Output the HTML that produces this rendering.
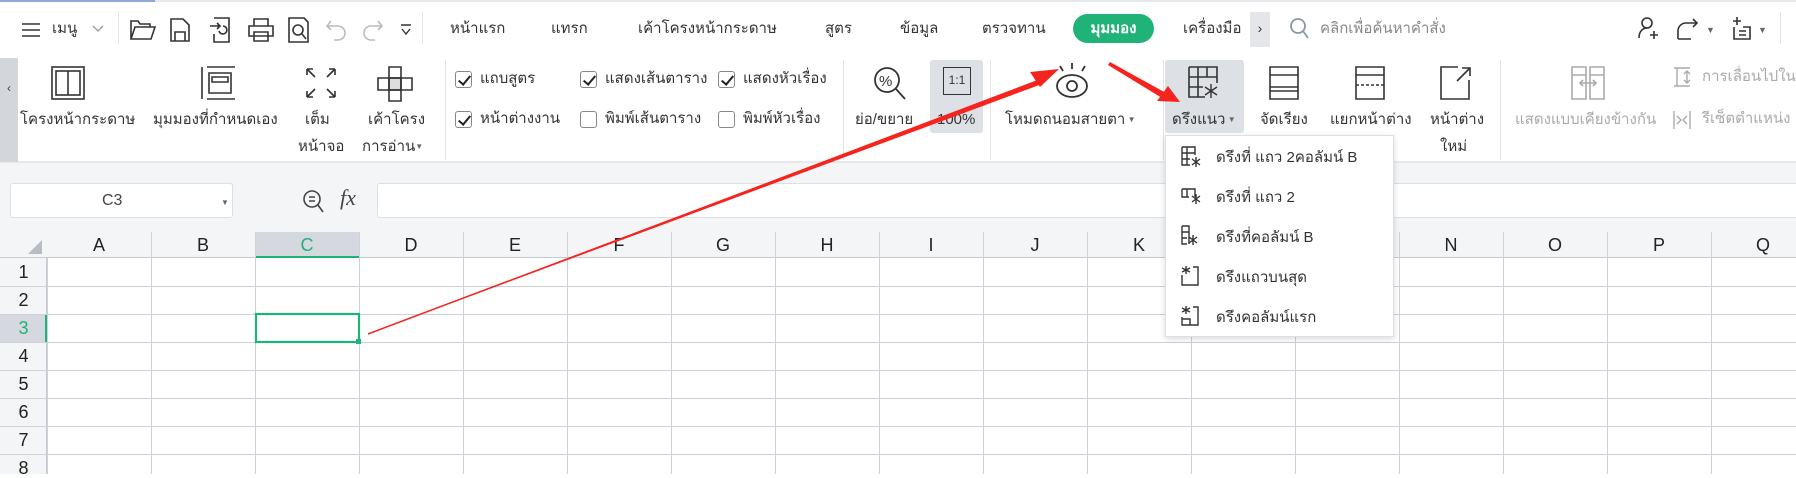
<!DOCTYPE html>
<html><head><meta charset="utf-8">
<style>
*{margin:0;padding:0;box-sizing:border-box}
body{width:1796px;height:474px;overflow:hidden;background:#fff;font-family:"Liberation Sans",sans-serif;color:#333;position:relative;line-height:20px}
.a{position:absolute;white-space:nowrap}
.t{font-size:15px;color:#333}
.sep{position:absolute;width:1px;background:#e2e4e8}
svg{position:absolute;overflow:visible}
.cb{position:absolute;width:17px;height:17px;border:1px solid #888;border-radius:3px;background:#fff}
.cb.on::after{content:"";position:absolute;left:5px;top:1px;width:5px;height:10px;border:solid #222;border-width:0 2px 2px 0;transform:rotate(40deg)}
.col{position:absolute;top:232px;height:26px;font-size:18px;text-align:center;line-height:26px;color:#222}
.row{position:absolute;left:0;width:47px;font-size:18px;text-align:center;color:#222}
.mi{position:absolute;left:1216px;font-size:15px;color:#333}
</style></head><body>
<div class="a" style="left:0;top:0;width:1796px;height:57px;background:#fff;border-top:2px solid #e6e8eb"></div>
<div class="a" style="left:0;top:0;width:155px;height:2px;background:#8fa8d8"></div>
<svg style="left:22px;top:22px" width="20" height="16"><path d="M0 2H18M0 8H18M0 14H18" stroke="#333" stroke-width="1.6"/></svg>
<div class="a t" style="left:52px;top:19px">เมนู</div>
<svg style="left:92px;top:25px" width="12" height="8"><path d="M1 1L6 6L11 1" stroke="#999" fill="none" stroke-width="1.3"/></svg>
<div class="sep" style="left:118px;top:12px;height:32px"></div>
<svg style="left:130px;top:19px" width="26" height="22" fill="none" stroke="#333" stroke-width="1.6"><path d="M1 20V2H8L10 5H20V8M1 20L5 8H25L21 20Z"/></svg>
<svg style="left:170px;top:18px" width="20" height="24" fill="none" stroke="#333" stroke-width="1.6"><path d="M1 1H13L19 7V23H1Z M5 23V14H15V23"/></svg>
<svg style="left:209px;top:17px" width="22" height="26" fill="none" stroke="#333" stroke-width="1.6"><path d="M5 1H20V25H5V17M1 9H11M8 6L11 9L8 12M10 14A4 4 0 1 0 14 9"/></svg>
<svg style="left:248px;top:18px" width="26" height="24" fill="none" stroke="#333" stroke-width="1.6"><path d="M6 8V1H20V8M1 8H25V18H1Z M6 14H20V23H6Z"/></svg>
<svg style="left:288px;top:17px" width="22" height="26" fill="none" stroke="#333" stroke-width="1.6"><path d="M1 1H16L20 5V25H1Z"/><circle cx="10" cy="13" r="5"/><path d="M14 17L18 22"/></svg>
<svg style="left:326px;top:20px" width="22" height="22" fill="none" stroke="#bbb" stroke-width="1.6"><path d="M5 1L1 6L5 10M1 6H12A7 7 0 0 1 12 20H8"/></svg>
<svg style="left:362px;top:20px" width="22" height="22" fill="none" stroke="#bbb" stroke-width="1.6"><path d="M16 1L20 6L16 10M20 6H9A7 7 0 0 0 9 20H13"/></svg>
<svg style="left:400px;top:24px" width="12" height="14" fill="none" stroke="#333" stroke-width="1.4"><path d="M1 1H11M2 5L6 10L10 5"/></svg>
<div class="sep" style="left:422px;top:12px;height:32px"></div>
<div class="a t" style="left:450px;top:19px">หน้าแรก</div>
<div class="a t" style="left:551px;top:19px">แทรก</div>
<div class="a t" style="left:638px;top:19px">เค้าโครงหน้ากระดาษ</div>
<div class="a t" style="left:825px;top:19px">สูตร</div>
<div class="a t" style="left:900px;top:19px">ข้อมูล</div>
<div class="a t" style="left:982px;top:19px">ตรวจทาน</div>
<div class="a" style="left:1073px;top:14px;width:81px;height:29px;border-radius:15px;background:#1fb377;color:#fff;font-size:15px;font-weight:bold;text-align:center;line-height:29px">มุมมอง</div>
<div class="a t" style="left:1183px;top:19px">เครื่องมือ</div>
<div class="a" style="left:1250px;top:12px;width:20px;height:35px;background:#e4e6ea;font-size:14px;text-align:center;line-height:32px">›</div>
<svg style="left:1290px;top:18px" width="20" height="22" fill="none" stroke="#8c96a8" stroke-width="1.8"><circle cx="8" cy="8" r="7"/><path d="M13 13L18 20"/></svg>
<div class="a" style="left:1320px;top:19px;font-size:15px;color:#888">คลิกเพื่อค้นหาคำสั่ง</div>
<svg style="left:1637px;top:16px" width="24" height="24" fill="none" stroke="#333" stroke-width="1.6"><circle cx="10" cy="7" r="5"/><path d="M2 22C2 15 6 12 10 12M17 15V23M13 19H21"/></svg>
<svg style="left:1677px;top:17px" width="24" height="24" fill="none" stroke="#333" stroke-width="1.6"><path d="M1 22H14M1 22V14A8 8 0 0 1 9 6H20M16 2L20 6L16 10"/></svg>
<div class="a" style="left:1706px;top:20px;font-size:9px;color:#666">▼</div>
<svg style="left:1731px;top:16px" width="24" height="24" fill="none" stroke="#333" stroke-width="1.6"><path d="M6 1V9M2 5H10M3 11V23H19V11H12M8 15H15M8 19H15"/></svg>
<div class="a" style="left:1758px;top:20px;font-size:9px;color:#666">▼</div>
<div class="sep" style="left:1780px;top:12px;height:32px"></div>

<div class="a" style="left:0;top:57px;width:1796px;height:106px;background:#fff;border-bottom:2px solid #e8e9ec"></div>
<div class="a" style="left:0;top:58px;width:18px;height:104px;background:#d3d6db;font-size:12px;text-align:center;line-height:60px;color:#444">‹</div>
<svg style="left:51px;top:66px" width="34" height="34" fill="none" stroke="#333" stroke-width="1.6"><rect x="1" y="1" width="32" height="32"/><rect x="5" y="5" width="24" height="24"/><path d="M17 5V29"/></svg>
<div class="a t" style="left:20px;top:110px">โครงหน้ากระดาษ</div>
<svg style="left:201px;top:66px" width="36" height="34" fill="none" stroke="#333" stroke-width="1.6"><path d="M1 1V33M6 1H34M6 33H34M8 7H30V27H8Z M11 11H27V16H11Z"/></svg>
<div class="a t" style="left:153px;top:110px">มุมมองที่กำหนดเอง</div>
<svg style="left:306px;top:68px" width="30" height="30" fill="none" stroke="#333" stroke-width="1.6"><path d="M1 1L9 9M1 1V7M1 1H7M29 1L21 9M29 1V7M29 1H23M1 29L9 21M1 29V23M1 29H7M29 29L21 21M29 29V23M29 29H23"/></svg>
<div class="a t" style="left:305px;top:110px">เต็ม</div>
<div class="a t" style="left:298px;top:137px">หน้าจอ</div>
<svg style="left:377px;top:66px" width="36" height="36" fill="none" stroke="#333" stroke-width="1.6"><rect x="12" y="12" width="12" height="12" fill="#ddd"/><path d="M12 1H24V35H12Z M1 12H35V24H1Z"/></svg>
<div class="a t" style="left:368px;top:110px">เค้าโครง</div>
<div class="a t" style="left:362px;top:137px">การอ่าน<span style="font-size:8px;color:#666;vertical-align:top">▼</span></div>
<div class="sep" style="left:445px;top:60px;height:100px"></div>

<div class="cb on" style="left:455px;top:71px"></div><div class="a t" style="left:480px;top:69px">แถบสูตร</div>
<div class="cb on" style="left:455px;top:111px"></div><div class="a t" style="left:480px;top:109px">หน้าต่างงาน</div>
<div class="cb on" style="left:580px;top:71px"></div><div class="a t" style="left:605px;top:69px">แสดงเส้นตาราง</div>
<div class="cb" style="left:580px;top:111px"></div><div class="a t" style="left:605px;top:109px">พิมพ์เส้นตาราง</div>
<div class="cb on" style="left:718px;top:71px"></div><div class="a t" style="left:743px;top:69px">แสดงหัวเรื่อง</div>
<div class="cb" style="left:718px;top:111px"></div><div class="a t" style="left:743px;top:109px">พิมพ์หัวเรื่อง</div>
<div class="sep" style="left:843px;top:60px;height:100px"></div>

<svg style="left:873px;top:66px" width="34" height="36" fill="none" stroke="#333" stroke-width="1.8"><circle cx="14" cy="14" r="12"/><path d="M23 23L32 33"/><text x="6" y="20" font-size="15" fill="#333" stroke="none" font-family="Liberation Sans">%</text></svg>
<div class="a t" style="left:855px;top:110px">ย่อ/ขยาย</div>
<div class="a" style="left:930px;top:60px;width:53px;height:73px;background:#dde0e5;border-radius:3px"></div>
<div class="a" style="left:943px;top:67px;width:28px;height:28px;border:1.6px solid #333;font-size:12px;text-align:center;line-height:25px">1:1</div>
<div class="a t" style="left:937px;top:110px">100%</div>
<div class="sep" style="left:990px;top:60px;height:100px"></div>
<svg style="left:1055px;top:62px" width="36" height="38" fill="none" stroke="#333" stroke-width="1.8"><path d="M17 1V7M5 4L8 9M30 4L27 9"/><ellipse cx="17" cy="24" rx="15" ry="11"/><circle cx="17" cy="24" r="5"/></svg>
<div class="a t" style="left:1005px;top:110px">โหมดถนอมสายตา<span style="font-size:8px;color:#666;vertical-align:top"> ▼</span></div>
<div class="sep" style="left:1163px;top:60px;height:100px"></div>
<div class="a" style="left:1165px;top:60px;width:79px;height:73px;background:#dde0e5;border-radius:3px"></div>
<svg style="left:1188px;top:66px" width="32" height="34" fill="none" stroke="#333" stroke-width="1.6"><path d="M1 1H29V17M1 1V31H17M10 1V31M1 11H29M1 21H15M19 1V11"/><path d="M23 18V32M17 21L29 29M29 21L17 29" stroke-width="1.4"/></svg>
<div class="a t" style="left:1172px;top:110px">ดรึงแนว<span style="font-size:8px;color:#666;vertical-align:top"> ▼</span></div>
<svg style="left:1269px;top:66px" width="30" height="34" fill="none" stroke="#333" stroke-width="1.6"><path d="M1 1H29V33H1Z M1 9H29M1 21H29M1 25H29"/></svg>
<div class="a t" style="left:1260px;top:110px">จัดเรียง</div>
<svg style="left:1355px;top:66px" width="30" height="34" fill="none" stroke="#333" stroke-width="1.6"><path d="M1 1H29V33H1Z M1 9H29"/><path d="M1 19H29" stroke-dasharray="3 2"/></svg>
<div class="a t" style="left:1330px;top:110px">แยกหน้าต่าง</div>
<svg style="left:1440px;top:66px" width="32" height="34" fill="none" stroke="#333" stroke-width="1.6"><path d="M18 1H1V33H29V14M17 15L30 2M22 2H30V10"/></svg>
<div class="a t" style="left:1430px;top:110px">หน้าต่าง</div>
<div class="a t" style="left:1440px;top:137px">ใหม่</div>
<div class="sep" style="left:1500px;top:60px;height:100px"></div>
<svg style="left:1571px;top:66px" width="34" height="34" fill="none" stroke="#aaa" stroke-width="1.6"><path d="M1 1H15V33H1Z M19 1H33V33H19Z M1 9H15M19 9H33M9 17H25M12 14L9 17L12 20M22 14L25 17L22 20"/></svg>
<div class="a" style="left:1515px;top:110px;font-size:15px;color:#aaa">แสดงแบบเคียงข้างกัน</div>
<svg style="left:1673px;top:67px" width="18" height="20" fill="none" stroke="#aaa" stroke-width="1.4"><path d="M1 1H17M1 19H17M4 1V19M14 4V16M11 7L14 4L17 7M11 13L14 16L17 13"/></svg>
<div class="a" style="left:1702px;top:67px;font-size:15px;color:#aaa">การเลื่อนไปใน</div>
<svg style="left:1673px;top:110px" width="18" height="20" fill="none" stroke="#aaa" stroke-width="1.4"><path d="M1 1V19M17 1V19M4 6L8 10L4 14M14 6L10 10L14 14"/></svg>
<div class="a" style="left:1702px;top:109px;font-size:15px;color:#aaa">รีเซ็ตตำแหน่ง</div>

<div class="a" style="left:0;top:163px;width:1796px;height:69px;background:#f4f5f7"></div>
<div class="a" style="left:10px;top:183px;width:223px;height:35px;background:#fff;border:1px solid #dcdfe4;border-radius:3px"></div>
<div class="a" style="left:102px;top:191px;font-size:16px;color:#444">C3</div>
<div class="a" style="left:221px;top:193px;font-size:8px;color:#666">▼</div>
<svg style="left:302px;top:189px" width="24" height="24" fill="none" stroke="#444" stroke-width="1.6"><circle cx="10" cy="10" r="8"/><path d="M16 16L21 23M7 8H13M7 12H13"/></svg>
<div class="a" style="left:340px;top:188px;font-size:22px;font-style:italic;font-family:'Liberation Serif',serif;color:#444">fx</div>
<div class="a" style="left:377px;top:183px;width:1430px;height:35px;background:#fff;border:1px solid #dcdfe4;border-radius:3px"></div>

<div class="a" style="left:0;top:232px;width:1796px;height:26px;background:#f4f5f7;border-bottom:1px solid #c5cad3"></div>
<div class="a" style="left:0;top:258px;width:47px;height:216px;background:#f4f5f7;border-right:1px solid #c5cad3"></div>
<svg style="left:28px;top:240px" width="14" height="14"><path d="M14 0V14H0Z" fill="#b8bcc4"/></svg>
<div class="a" style="left:255px;top:232px;width:104px;height:26px;background:#d5d8de;border-bottom:2px solid #1fb377"></div>
<div class="a" style="left:0;top:314px;width:47px;height:28px;background:#d5d8de;border-right:2px solid #1fb377"></div>
<svg style="left:0;top:0" width="1796" height="474">
<g stroke="#cdd1d9" stroke-width="1">
<path d="M47.5 258V474M151.5 232V474M255.5 232V474M359.5 232V474M463.5 232V474M567.5 232V474M671.5 232V474M775.5 232V474M879.5 232V474M983.5 232V474M1087.5 232V474M1191.5 232V474M1295.5 232V474M1399.5 232V474M1503.5 232V474M1607.5 232V474M1711.5 232V474"/>
<path d="M0 286.5H1796M0 314.5H1796M0 342.5H1796M0 370.5H1796M0 398.5H1796M0 426.5H1796M0 454.5H1796"/>
</g>
<rect x="256" y="314" width="103" height="28" fill="none" stroke="#1fb377" stroke-width="2.2"/>
<rect x="356" y="339" width="5" height="5" fill="#1fb377"/>
</svg>
<div class="col" style="left:47px;width:104px">A</div><div class="col" style="left:151px;width:104px">B</div>
<div class="col" style="left:255px;width:104px;color:#1fb377">C</div><div class="col" style="left:359px;width:104px">D</div>
<div class="col" style="left:463px;width:104px">E</div><div class="col" style="left:567px;width:104px">F</div>
<div class="col" style="left:671px;width:104px">G</div><div class="col" style="left:775px;width:104px">H</div>
<div class="col" style="left:879px;width:104px">I</div><div class="col" style="left:983px;width:104px">J</div>
<div class="col" style="left:1087px;width:104px">K</div><div class="col" style="left:1191px;width:104px">L</div>
<div class="col" style="left:1295px;width:104px">M</div><div class="col" style="left:1399px;width:104px">N</div>
<div class="col" style="left:1503px;width:104px">O</div><div class="col" style="left:1607px;width:104px">P</div>
<div class="col" style="left:1711px;width:104px">Q</div>
<div class="row" style="top:262px">1</div><div class="row" style="top:290px">2</div>
<div class="row" style="top:318px;color:#1fb377">3</div><div class="row" style="top:346px">4</div>
<div class="row" style="top:374px">5</div><div class="row" style="top:402px">6</div>
<div class="row" style="top:430px">7</div><div class="row" style="top:458px">8</div>

<div class="a" style="left:1165px;top:135px;width:229px;height:202px;background:#fff;border:1px solid #dcdfe4;box-shadow:0 2px 6px rgba(0,0,0,.15)"></div>
<svg style="left:1181px;top:146px" width="26" height="180" fill="none" stroke="#333" stroke-width="1.4">
<path d="M1 1H14V9M1 1V19H9M6 1V19M1 7H14M1 13H9"/><path d="M15 11V21M11 13L19 19M19 13L11 19"/>
<path d="M1 43H14V51M1 43V51H8M6 43V51"/><path d="M15 48V58M11 50L19 56M19 50L11 56"/>
<path d="M1 80H8V98M1 80V98H6M1 86H8M1 92H6"/><path d="M12 89V99M8 91L16 97M16 91L8 97"/>
<path d="M12 121H17V139H1V129"/><path d="M5 120V128M1 122L9 126M9 122L1 126"/>
<path d="M12 161H17V179H1V171M1 173H9V179"/><path d="M5 160V168M1 162L9 166M9 162L1 166"/>
</svg>
<div class="mi" style="top:148px">ดรึงที่ แถว 2คอลัมน์ B</div>
<div class="mi" style="top:188px">ดรึงที่ แถว 2</div>
<div class="mi" style="top:228px">ดรึงที่คอลัมน์ B</div>
<div class="mi" style="top:268px">ดรึงแถวบนสุด</div>
<div class="mi" style="top:308px">ดรึงคอลัมน์แรก</div>

<svg style="left:0;top:0" width="1796" height="474">
<polygon points="368,334 1040,79 1042,84" fill="#f5241e"/>
<polygon points="1059,69 1030,72 1040,87" fill="#f5241e"/>
<line x1="368" y1="334" x2="1042" y2="80" stroke="#f5241e" stroke-width="1.5"/>
<polygon points="1108,65 1110,62 1166,93 1162,98" fill="#f5241e"/>
<polygon points="1180,102 1157,101 1168,86" fill="#f5241e"/>
</svg>
</body></html>
